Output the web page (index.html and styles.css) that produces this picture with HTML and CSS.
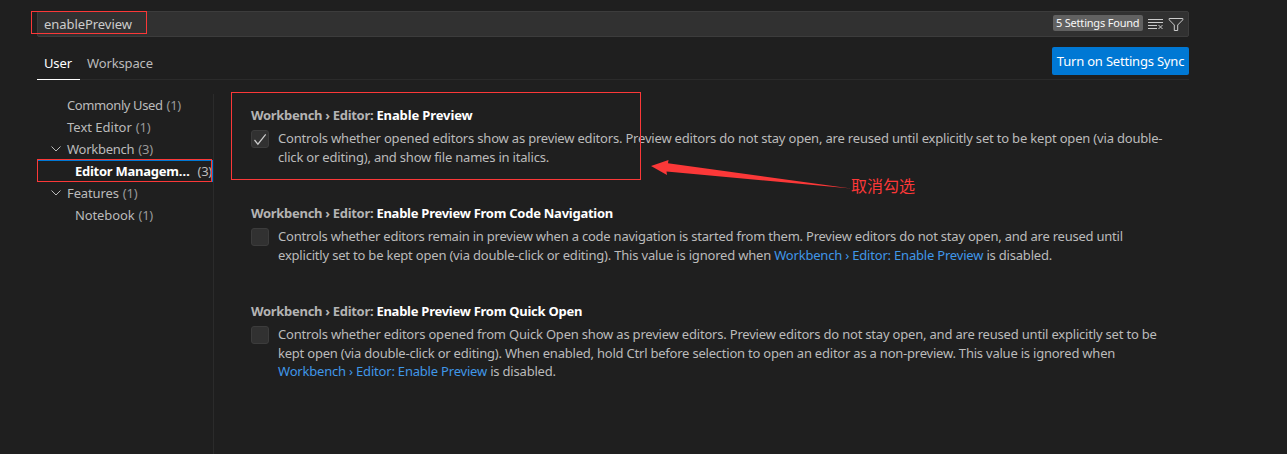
FILE: index.html
```html
<!DOCTYPE html>
<html lang="en">
<head>
<meta charset="utf-8">
<title>Settings</title>
<link rel="stylesheet" href="styles.css">
</head>
<body>
<div class="settings">
  <div class="search">
    <span class="query">enablePreview</span>
    <span class="found">5 Settings Found</span>
    <svg class="icon" viewBox="0 0 16 16"><path d="M0 3.5h15M0 6.5h15M0 9.5h9M0 12.5h9M10.5 9l4 4M14.5 9l-4 4"/></svg>
    <svg class="icon filter" viewBox="0 0 16 16"><path d="M1.2 2.5h13.6v1.3L9.7 9v5.5H6.3V9L1.2 3.8z"/></svg>
  </div>
  <div class="header">
    <div class="tab active">User</div>
    <div class="tab">Workspace</div>
    <button class="sync">Turn on Settings Sync</button>
  </div>
  <div class="body">
    <nav class="toc">
      <div class="row"><span class="tight">Commonly Used</span><span class="count">(1)</span></div>
      <div class="row"><span>Text Editor</span><span class="count">(1)</span></div>
      <div class="row"><svg class="chevron" viewBox="0 0 10 6"><path d="M.5.5L5 5 9.5.5"/></svg><span class="snug">Workbench</span><span class="count">(3)</span></div>
      <div class="row child selected"><span class="snug">Editor Managem…</span><span class="count">(3)</span></div>
      <div class="row"><svg class="chevron" viewBox="0 0 10 6"><path d="M.5.5L5 5 9.5.5"/></svg><span class="loose">Features</span><span class="count">(1)</span></div>
      <div class="row child"><span class="loose">Notebook</span><span class="count">(1)</span></div>
    </nav>
    <main class="list">
      <section class="item">
        <h3><span class="category">Workbench › Editor: </span><span class="loose">Enable Preview</span></h3>
        <div class="value">
          <span class="check"><svg viewBox="0 0 16 16"><path d="M2.5 9l3.4 4.2L13.7 3.3"/></svg></span>
          <p><span class="line wide">Controls whether opened editors show as preview editors. Preview editors do not stay open, are reused until explicitly set to be kept open (via double-</span>
          <span class="line">click or editing), and show file names in italics.</span></p>
        </div>
      </section>
      <section class="item">
        <h3><span class="category">Workbench › Editor: </span><span class="snug">Enable Preview From Code Navigation</span></h3>
        <div class="value">
          <span class="check"></span>
          <p><span class="line narrow">Controls whether editors remain in preview when a code navigation is started from them. Preview editors do not stay open, and are reused until</span>
          <span class="line">explicitly set to be kept open (via double-click or editing). This value is ignored when <a>Workbench › Editor: Enable Preview</a> is disabled.</span></p>
        </div>
      </section>
      <section class="item">
        <h3><span class="category">Workbench › Editor: </span><span class="snug">Enable Preview From Quick Open</span></h3>
        <div class="value">
          <span class="check"></span>
          <p><span class="line">Controls whether editors opened from Quick Open show as preview editors. Preview editors do not stay open, and are reused until explicitly set to be</span>
          <span class="line medium">kept open (via double-click or editing). When enabled, hold Ctrl before selection to open an editor as a non-preview. This value is ignored when</span>
          <span class="line last"><a>Workbench › Editor: Enable Preview</a> is disabled.</span></p>
        </div>
      </section>
    </main>
  </div>
</div>
<div class="mark mark-query"></div>
<div class="mark mark-toc"></div>
<div class="mark mark-item"></div>
<svg class="arrow" viewBox="0 0 200 40"><path d="M0 11L17.5 5 17 8.2 200 33.5 15.5 16.5 16 20z"/></svg>
<div class="note">取消勾选</div>
</body>
</html>
```
FILE: styles.css
```css
* { box-sizing: border-box; }
body { margin: 0; width: 1287px; height: 454px; overflow: hidden; background: #1f1f1f; color: #bbb; font: 13px/18px "Noto Sans", sans-serif; }
.settings { height: 454px; overflow: hidden; padding: 11px 98px 0 37px; }
.search { display: flex; align-items: center; height: 26px; background: #313131; border: 1px solid #3c3c3c; border-radius: 2px; padding: 0 4px 0 6px; }
.query { flex: 1; color: #ccc; letter-spacing: -.06px; }
.found { background: #616161; color: #f8f8f8; font-size: 11px; letter-spacing: -.2px; width: 90px; height: 16px; line-height: 16px; padding: 0 3px; border-radius: 2px; margin: -2px 5px 0 0; white-space: nowrap; }
.icon { width: 16px; height: 16px; fill: none; stroke: #ccc; }
.filter { margin-left: 4px; }
.header { display: flex; margin-top: 10px; height: 33px; border-bottom: 1px solid #2b2b2b; }
.tab { padding: 7px 8px 0 7px; height: 33px; letter-spacing: -.14px; }
.tab.active { width: 43px; color: #fff; border-bottom: 1px solid #fff; }
.sync { margin-left: auto; width: 137px; height: 28px; border: 0; border-radius: 2px; background: #0078d4; color: #fff; font: inherit; letter-spacing: -.2px; padding: 0; white-space: nowrap; }
.body { display: flex; }
.toc { flex: none; width: 177px; height: 374px; margin-top: 14px; border-right: 1px solid #2b2b2b; }
.row { display: flex; height: 22px; line-height: 22px; padding-left: 30px; white-space: nowrap; position: relative; }
.child { padding-left: 38px; }
.count { margin-left: 4px; color: #999; letter-spacing: -.25px; }
.selected { font-weight: 700; color: #fff; padding-right: 1px; box-shadow: inset 0 0 0 1px #0078d4; }
.selected .count { font-weight: 400; color: #bbb; margin-left: auto; }
.chevron { position: absolute; left: 14px; top: 8px; width: 10px; height: 6px; fill: none; stroke: #bbb; }
.list { padding: 26px 0 0 37px; }
.item { height: 98px; }
h3 { margin: 0; font-size: 13px; line-height: 18px; color: #fff; white-space: pre; }
.category { color: #b4b4b4; letter-spacing: -.3px; }
.value { display: flex; gap: 9px; padding-top: 5px; }
.check { flex: none; width: 18px; height: 18px; margin-top: 1px; background: #313131; border: 1px solid #3c3c3c; border-radius: 3px; }
.check svg { display: block; fill: none; stroke: #ccc; stroke-width: 1.2; }
p { margin: 0; line-height: 19px; }
.line { display: table; white-space: nowrap; letter-spacing: -.197px; }
.last { line-height: 17px; }
.wide { letter-spacing: -.188px; }
.medium { letter-spacing: -.218px; }
.narrow { letter-spacing: -.227px; }
.tight { letter-spacing: -.4px; }
.snug { letter-spacing: -.26px; }
.loose { letter-spacing: -.12px; }
a { color: #4097e8; }
.mark { position: absolute; border: 1px solid #fb3838; }
.mark-query { left: 31px; top: 11px; width: 116px; height: 23px; }
.mark-toc { left: 37px; top: 159px; width: 175px; height: 23px; }
.mark-item { left: 231px; top: 92px; width: 410px; height: 88px; }
.arrow { position: absolute; left: 651px; top: 155px; width: 200px; height: 40px; fill: #fb3838; }
.note { position: absolute; left: 851px; top: 175px; color: #fb3838; font: 16px/20px "Noto Sans CJK SC", sans-serif; }
```
